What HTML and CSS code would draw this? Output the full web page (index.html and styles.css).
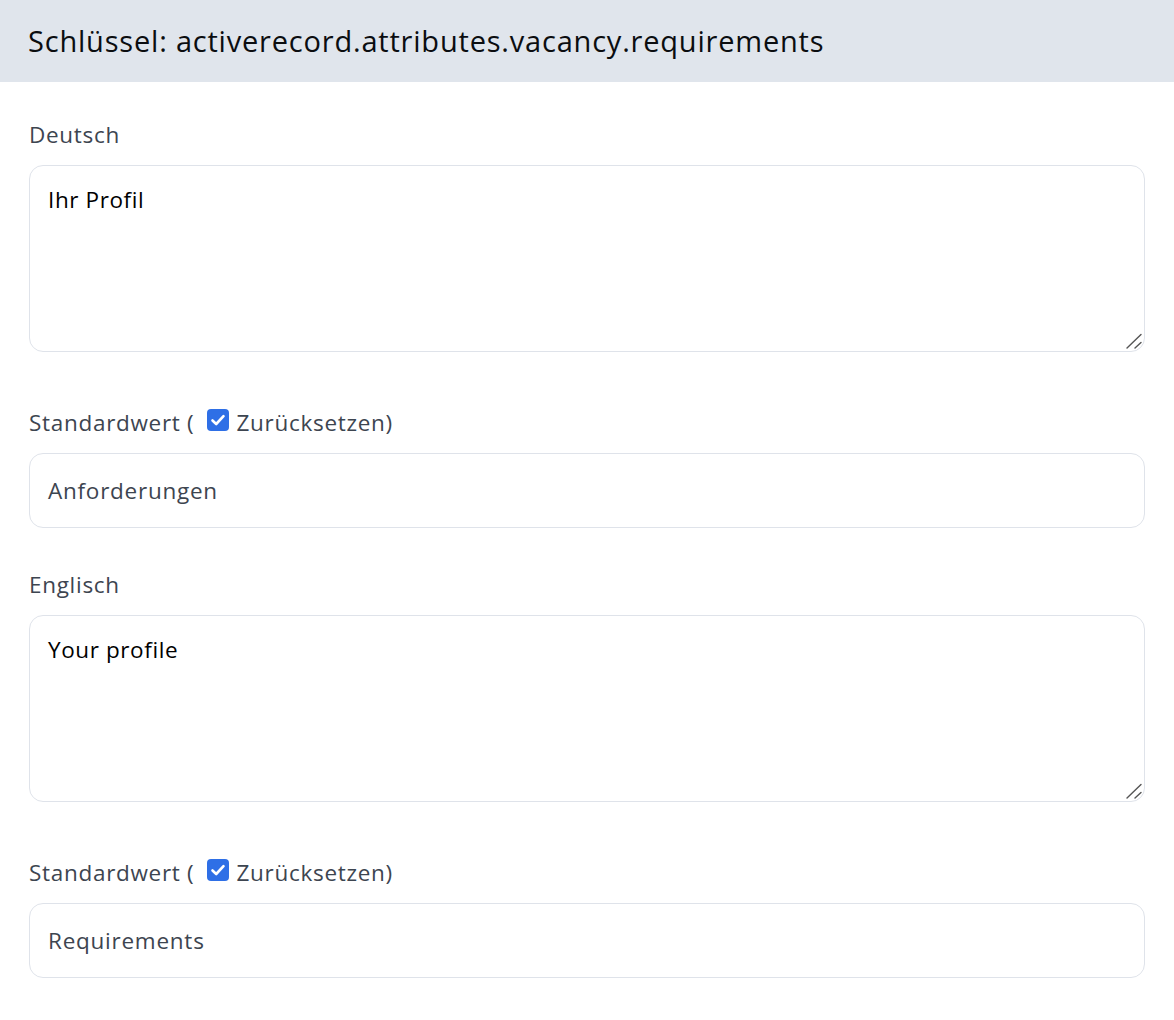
FILE: index.html
```html
<!DOCTYPE html>
<html lang="de">
<head>
<meta charset="utf-8">
<title>Übersetzung</title>
<link rel="stylesheet" href="styles.css">
</head>
<body>
<header class="head">
  <h1 class="head-title">Schlüssel: activerecord.attributes.vacancy.requirements</h1>
</header>
<main class="form">
  <div class="group group-area">
    <label class="label">Deutsch</label>
    <div class="area-wrap">
      <textarea class="area">Ihr Profil</textarea>
      <svg class="grip" viewBox="0 0 20 20" width="20" height="20"><path d="M3 17 L17 3.5 M11 17 L17 11.5" stroke="#555" stroke-width="1.4" stroke-linecap="round" fill="none"/></svg>
    </div>
  </div>
  <div class="group">
    <label class="label">Standardwert ( <span class="check"><svg viewBox="0 0 22 22" width="22" height="22"><rect x="0" y="0" width="22" height="22" rx="4" fill="#2e6fe6"/><path d="M5.5 11.5 L9.2 15 L16.5 7.2" fill="none" stroke="#fff" stroke-width="2.6" stroke-linecap="round" stroke-linejoin="round"/></svg></span> Zurücksetzen)</label>
    <div class="field">Anforderungen</div>
  </div>
  <div class="group group-area">
    <label class="label">Englisch</label>
    <div class="area-wrap">
      <textarea class="area">Your profile</textarea>
      <svg class="grip" viewBox="0 0 20 20" width="20" height="20"><path d="M3 17 L17 3.5 M11 17 L17 11.5" stroke="#555" stroke-width="1.4" stroke-linecap="round" fill="none"/></svg>
    </div>
  </div>
  <div class="group">
    <label class="label">Standardwert ( <span class="check"><svg viewBox="0 0 22 22" width="22" height="22"><rect x="0" y="0" width="22" height="22" rx="4" fill="#2e6fe6"/><path d="M5.5 11.5 L9.2 15 L16.5 7.2" fill="none" stroke="#fff" stroke-width="2.6" stroke-linecap="round" stroke-linejoin="round"/></svg></span> Zurücksetzen)</label>
    <div class="field">Requirements</div>
  </div>
</main>
</body>
</html>
```

FILE: styles.css
```css
* { box-sizing: border-box; }
html, body { margin: 0; padding: 0; background: #ffffff; }
body {
  font-family: "Open Sans", Lato, sans-serif;
  color: #000;
}
.head {
  background: #e0e5ec;
  height: 82px;
  display: flex;
  align-items: center;
  padding: 0 28px;
}
.head-title {
  margin: 0;
  font-weight: 400;
  font-size: 29px;
  line-height: 36px;
  letter-spacing: 0.8px;
  color: #0b0d10;
}
.form {
  padding: 38px 29px 0 29px;
  display: flex;
  flex-direction: column;
}
.group { display: flex; flex-direction: column; }
.group + .group { margin-top: 42px; }
.group-area + .group { margin-top: 56px; }
.label {
  display: flex;
  align-items: center;
  font-size: 22.5px;
  line-height: 30px;
  letter-spacing: 0.7px;
  color: #3d4550;
  margin-bottom: 15px;
  white-space: pre;
}
.check { display: inline-flex; width: 22px; height: 22px; margin: -6px 1px 0 6px; }
.check svg { display: block; }
.area-wrap { position: relative; }
.area {
  display: block;
  width: 100%;
  height: 187px;
  border: 1px solid #dfe3ea;
  border-radius: 14px;
  padding: 19px 18px;
  font-family: "Open Sans", Lato, sans-serif;
  font-size: 22.5px;
  line-height: 30px;
  letter-spacing: 0.6px;
  color: #000;
  resize: none;
  outline: none;
  margin: 0;
}
.grip {
  position: absolute;
  right: 1px;
  bottom: 1px;
  display: block;
}
.field {
  height: 75px;
  border: 1px solid #dfe3ea;
  border-radius: 14px;
  padding: 0 18px;
  display: flex;
  align-items: center;
  font-size: 22.5px;
  letter-spacing: 0.75px;
  color: #3d4550;
}
```
